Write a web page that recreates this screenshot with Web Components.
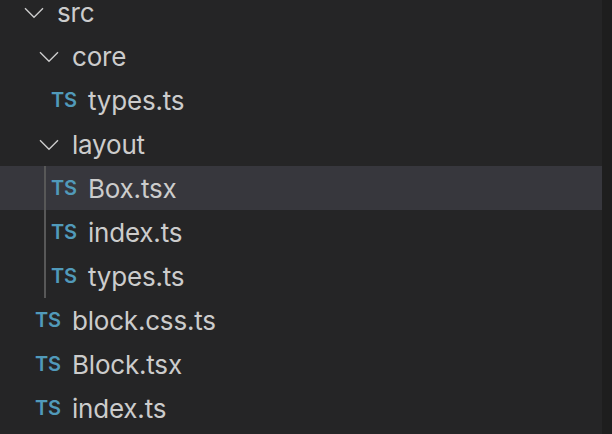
<!DOCTYPE html>
<html><head><meta charset="utf-8"><style>
html,body{margin:0;padding:0;background:#252526}
</style></head><body>
<template id="t-tree"><style>
:host{display:flex;width:612px;height:434px;overflow:hidden;background:#1e1e1e;font-family:Inter,"Liberation Sans",sans-serif}
.list{width:602px;background:#252526;margin:0;padding:0;overflow:hidden}
</style><div class="list"><slot></slot></div></template>
<template id="t-row"><style>
:host{display:flex;align-items:center;height:44px;padding-top:4px;box-sizing:border-box;color:#cccccc;font-size:26px;line-height:24px;letter-spacing:-.2px;white-space:nowrap}
:host([selected]){background:#37373d}
:host([first]){height:34px;padding-top:0;padding-bottom:6px}
.ic{display:flex;align-items:center;justify-content:flex-start;width:36px;flex:none;height:24px}
.label{margin-bottom:2px}
.ts{font:600 20px/24px Inter,"Liberation Sans",sans-serif;color:#519aba;letter-spacing:-.2px;margin:0 0 4px -1px}
svg{display:block;margin:0 0 2px 3px}
</style><span class="ic" id="ic"></span><span class="label"><slot></slot></span></template>
<template id="t-group"><style>
:host{display:block;position:relative}
.guide{position:absolute;left:44px;top:0;bottom:0;width:2px;background:#585858;z-index:1}
</style><div class="guide"></div><slot></slot></template>
<script>
class FileTree extends HTMLElement{constructor(){super();this.attachShadow({mode:'open'}).append(document.getElementById('t-tree').content.cloneNode(true))}}
class TreeRow extends HTMLElement{constructor(){super();this.attachShadow({mode:'open'}).append(document.getElementById('t-row').content.cloneNode(true))}
connectedCallback(){const ic=this.shadowRoot.getElementById('ic');
if(this.getAttribute('kind')==='dir'){ic.innerHTML='<svg width="20" height="12" viewBox="0 0 20 12" fill="none" stroke="#cccccc" stroke-width="1.4"><path d="M1 1.2L10 10.2L19 1.2"/></svg>'}
else{ic.innerHTML='<span class="ts">TS</span>'}
this.style.paddingLeft=this.getAttribute('indent')+'px'}}
class TreeGroup extends HTMLElement{constructor(){super();this.attachShadow({mode:'open'}).append(document.getElementById('t-group').content.cloneNode(true))}}
customElements.define('file-tree',FileTree);customElements.define('tree-row',TreeRow);customElements.define('tree-group',TreeGroup);
</script>
<file-tree>
<tree-row kind="dir" indent="21" first>src</tree-row>
<tree-row kind="dir" indent="36">core</tree-row>
<tree-row kind="file" indent="52">types.ts</tree-row>
<tree-row kind="dir" indent="36">layout</tree-row>
<tree-group>
<tree-row kind="file" indent="52" selected>Box.tsx</tree-row>
<tree-row kind="file" indent="52">index.ts</tree-row>
<tree-row kind="file" indent="52">types.ts</tree-row>
</tree-group>
<tree-row kind="file" indent="36">block.css.ts</tree-row>
<tree-row kind="file" indent="36">Block.tsx</tree-row>
<tree-row kind="file" indent="36">index.ts</tree-row>
</file-tree>
</body></html>
